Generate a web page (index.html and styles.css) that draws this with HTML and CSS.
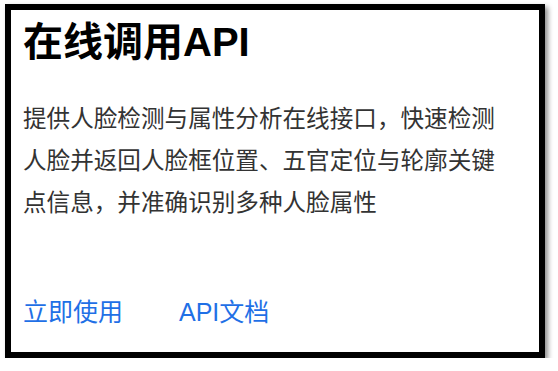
FILE: index.html
```html
<!DOCTYPE html>
<html lang="zh-CN">
<head>
  <meta charset="UTF-8">
  <title>在线调用API</title>

  <link rel="stylesheet" href="styles.css">
</head>
<body>
  <div class="card">
    <h2 class="title">在线调用API</h2>
    <p class="desc">提供人脸检测与属性分析在线接口，快速检测人脸并返回人脸框位置、五官定位与轮廓关键点信息，并准确识别多种人脸属性</p>
    <div class="links">
      <a href="#">立即使用</a>
      <a href="#">API文档</a>
    </div>
  </div>
</body>
</html>
```

FILE: styles.css
```css
html {
  box-sizing: border-box;
  font-family: "Liberation Sans", "Noto Sans CJK SC", sans-serif;
}

body {
  margin: 0;
  background: #fff;
}

.card {
  width: 540px;
  height: 354px;
  margin: 4px 0 0 5px;
  box-sizing: border-box;
  border: 6px solid #000;
  box-shadow: 3px 3px 5px rgba(0,0,0,.45);
  padding: 6px 26px 0 12px;
  display: flex;
  flex-direction: column;
}

.title {
  margin: 0;
  font-size: 40px;
  line-height: 52px;
  font-weight: bold;
  color: #000;
}

.desc {
  margin: 30px 0 0;
  font-size: 23.6px;
  line-height: 42px;
  color: #333;
}

.links {
  margin-top: auto;
  margin-bottom: 24px;
  display: flex;
  gap: 56px;
}

.links a {
  font-size: 25px;
  line-height: 32px;
  color: #1f70e6;
  text-decoration: none;
}
```
